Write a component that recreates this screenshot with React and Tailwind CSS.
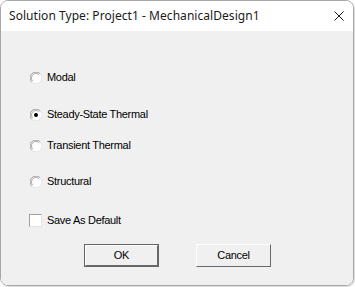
import React from 'react';

const Radio = ({ checked }) => (
    <svg width="12" height="12" viewBox="0 0 12 12" className="shrink-0">
        <circle cx="6" cy="6" r="5.5" fill="#ffffff" />
        <path d="M1.8 10.2 A5.5 5.5 0 0 1 10.2 1.8" fill="none" stroke="#a0a0a0" strokeWidth="1" />
        <path d="M10.2 1.8 A5.5 5.5 0 0 1 1.8 10.2" fill="none" stroke="#e3e3e3" strokeWidth="1" />
        <path d="M2.8 9.2 A4.5 4.5 0 0 1 9.2 2.8" fill="none" stroke="#696969" strokeWidth="1" opacity="0.55" />
        {checked && <circle cx="6" cy="6" r="2" fill="#000000" />}
    </svg>
);

const Option = ({ label, checked, className }) => (
    <div className={`flex items-center h-[13px] pl-[29px] gap-[5px] ${className}`}>
        <Radio checked={checked} />
        <span>{label}</span>
    </div>
);

const Button = ({ label, isDefault }) => (
    <button
        className={`w-[75px] h-[23px] bg-[#f0f0f0] flex items-center justify-center ${isDefault ? 'border border-[#646464]' : ''}`}
    >
        <span className="w-full h-full flex items-center justify-center border-t border-l border-t-white border-l-white border-r border-b border-r-[#696969] border-b-[#696969]">
            {label}
        </span>
    </button>
);

export default function App() {
    return (
        <div className="w-[355px] h-[287px] bg-white">
            <div className="w-[354px] h-[286px] flex flex-col rounded-[8px] overflow-hidden border border-[#a8a8a8] shadow-[1px_1px_1px_rgba(0,0,0,0.15)]">
                <div className="h-[30px] bg-white flex items-center justify-between pl-[8px] pr-[9px] shrink-0">
                    <span className="text-[12px] text-[#1a1a1a] font-['Noto_Sans','Segoe_UI',sans-serif] tracking-[0.05px]">
                        Solution Type: Project1 - MechanicalDesign1
                    </span>
                    <svg width="10" height="10" viewBox="0 0 10 10">
                        <path d="M0.5 0.5 L9.5 9.5 M9.5 0.5 L0.5 9.5" stroke="#1a1a1a" strokeWidth="1" />
                    </svg>
                </div>
                <div className="flex-1 bg-[#f0f0f0] flex flex-col text-[11px] text-black font-['Liberation_Sans',Arial,sans-serif] leading-none tracking-[-0.3px]">
                    <Option label="Modal" className="mt-[40px]" />
                    <Option label="Steady-State Thermal" checked className="mt-[24px]" />
                    <Option label="Transient Thermal" className="mt-[18px]" />
                    <Option label="Structural" className="mt-[23px]" />
                    <div className="flex items-center h-[13px] pl-[28px] gap-[5px] mt-[26px]">
                        <span className="w-[13px] h-[13px] bg-white border border-t-[#a0a0a0] border-l-[#a0a0a0] border-r-[#e3e3e3] border-b-[#e3e3e3] shrink-0" />
                        <span>Save As Default</span>
                    </div>
                    <div className="flex pl-[83px] gap-[37px] mt-[17px]">
                        <Button label="OK" isDefault />
                        <Button label="Cancel" />
                    </div>
                </div>
            </div>
        </div>
    );
}
